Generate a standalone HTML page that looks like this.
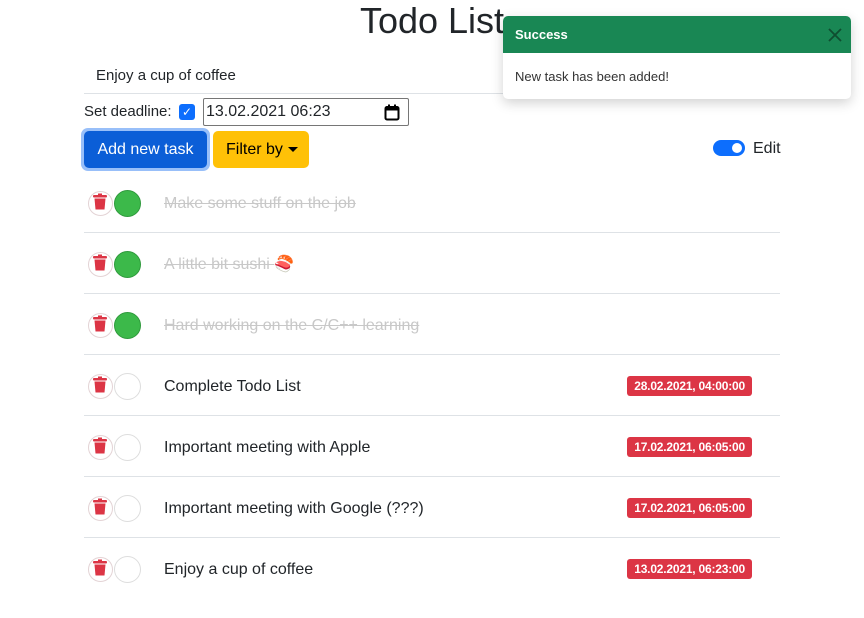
<!DOCTYPE html>
<html><head><style>
*{box-sizing:border-box;margin:0;padding:0}
body{width:864px;height:618px;background:#fff;font-family:"Liberation Sans",sans-serif;color:#212529;position:relative;overflow:hidden}
.a{position:absolute}
h1{position:absolute;left:0;width:864px;text-align:center;top:0;font-size:36px;font-weight:500;line-height:42px}
.row{position:absolute;left:84px;width:696px;height:61px;border-bottom:1px solid #dee2e6}
.tr{position:absolute;left:4px;top:19px;width:25px;height:25px;border:1px solid #e3d3d5;border-radius:50%;background:#fff}
.ck{position:absolute;left:30px;top:18px;width:27px;height:27px;border:1px solid #ddd;border-radius:50%;background:#fff}
.ck.on{background:#3cb94a;border-color:#2f9a3c}
.tx{position:absolute;left:80px;top:21px;font-size:16px;line-height:22px}
.done{color:#c8c8c8;text-decoration:line-through}
.bd{position:absolute;right:28px;top:21px;background:#dc3545;color:#fff;font-size:12px;font-weight:bold;padding:3px 7px;border-radius:3px;line-height:14px;letter-spacing:-0.2px}
</style></head><body>
<h1>Todo List</h1>
<div class="a" style="left:96px;top:67px;font-size:15px">Enjoy a cup of coffee</div>
<div class="a" style="left:84px;top:93px;width:420px;height:1px;background:#dee2e6"></div>
<div class="a" style="left:84px;top:103px;font-size:15px">Set deadline:</div>
<div class="a" style="left:179px;top:104px;width:16px;height:16px;background:#0d6efd;border-radius:3px;color:#fff;font-size:12px;text-align:center;line-height:16px">✓</div>
<div class="a" style="left:203px;top:98px;width:206px;height:28px;border:1px solid #767676;border-radius:2px;font-size:16px;padding:4px 2px;line-height:18px">13.02.2021 06:23
<svg class="a" style="right:8px;top:5px" width="16" height="17" viewBox="0 0 16 17"><rect x="1.5" y="3" width="13" height="12.5" rx="1.5" fill="none" stroke="#000" stroke-width="2"/><rect x="1" y="3" width="14" height="3.5" fill="#000"/><rect x="4" y="0.5" width="2" height="3" fill="#000"/><rect x="10" y="0.5" width="2" height="3" fill="#000"/></svg></div>
<div class="a" style="left:81px;top:128px;width:129px;height:43px;border-radius:7px;background:#98bff9"></div>
<div class="a" style="left:84px;top:131px;width:123px;height:37px;background:#0b5ed7;border-radius:5px;color:#fff;font-size:16px;text-align:center;line-height:37px">Add new task</div>
<div class="a" style="left:213px;top:131px;width:96px;height:37px;background:#ffc107;border-radius:5px;color:#000;font-size:16px;line-height:37px;padding-left:13px">Filter by<span class="a" style="left:75px;top:16px;border-left:5px solid transparent;border-right:5px solid transparent;border-top:5px solid #000"></span></div>
<div class="a" style="left:713px;top:140px;width:32px;height:16px;background:#0d6efd;border-radius:8px"><div class="a" style="right:3px;top:3px;width:10px;height:10px;background:#fff;border-radius:50%"></div></div>
<div class="a" style="left:753px;top:140px;font-size:16px">Edit</div>

<div class="row" style="top:172px"><div class="tr"></div><div class="ck on"></div><div class="tx done">Make some stuff on the job</div></div>
<div class="row" style="top:233px"><div class="tr"></div><div class="ck on"></div><div class="tx done">A little bit sushi <span style="text-decoration:none;display:inline-block;color:#000">🍣</span></div></div>
<div class="row" style="top:294px"><div class="tr"></div><div class="ck on"></div><div class="tx done">Hard working on the C/C++ learning</div></div>
<div class="row" style="top:355px"><div class="tr"></div><div class="ck"></div><div class="tx">Complete Todo List</div><div class="bd">28.02.2021, 04:00:00</div></div>
<div class="row" style="top:416px"><div class="tr"></div><div class="ck"></div><div class="tx">Important meeting with Apple</div><div class="bd">17.02.2021, 06:05:00</div></div>
<div class="row" style="top:477px"><div class="tr"></div><div class="ck"></div><div class="tx">Important meeting with Google (???)</div><div class="bd">17.02.2021, 06:05:00</div></div>
<div class="row" style="top:538px;border-bottom:none"><div class="tr"></div><div class="ck"></div><div class="tx">Enjoy a cup of coffee</div><div class="bd">13.02.2021, 06:23:00</div></div>

<svg class="a" style="left:93px;top:0" width="14" height="618">
<g fill="#dc3545">
<g transform="translate(0,195)"><rect x="0" y="0" width="14" height="2.5" rx="1"/><rect x="5" y="-1.5" width="4" height="2"/><path d="M1.5 3.5h11l-1 11h-9z"/></g>
<g transform="translate(0,256)"><rect x="0" y="0" width="14" height="2.5" rx="1"/><rect x="5" y="-1.5" width="4" height="2"/><path d="M1.5 3.5h11l-1 11h-9z"/></g>
<g transform="translate(0,317)"><rect x="0" y="0" width="14" height="2.5" rx="1"/><rect x="5" y="-1.5" width="4" height="2"/><path d="M1.5 3.5h11l-1 11h-9z"/></g>
<g transform="translate(0,378)"><rect x="0" y="0" width="14" height="2.5" rx="1"/><rect x="5" y="-1.5" width="4" height="2"/><path d="M1.5 3.5h11l-1 11h-9z"/></g>
<g transform="translate(0,439)"><rect x="0" y="0" width="14" height="2.5" rx="1"/><rect x="5" y="-1.5" width="4" height="2"/><path d="M1.5 3.5h11l-1 11h-9z"/></g>
<g transform="translate(0,500)"><rect x="0" y="0" width="14" height="2.5" rx="1"/><rect x="5" y="-1.5" width="4" height="2"/><path d="M1.5 3.5h11l-1 11h-9z"/></g>
<g transform="translate(0,561)"><rect x="0" y="0" width="14" height="2.5" rx="1"/><rect x="5" y="-1.5" width="4" height="2"/><path d="M1.5 3.5h11l-1 11h-9z"/></g>
</g></svg>

<div class="a" style="left:503px;top:16px;width:348px;height:83px;background:#fff;border-radius:5px;box-shadow:0 4px 12px rgba(0,0,0,.18);overflow:hidden">
<div style="height:37px;background:#198754;color:#fff;font-weight:bold;font-size:13px;padding:0 12px;line-height:38px;position:relative">Success
<svg class="a" style="right:8px;top:11px" width="16" height="16"><path d="M2 2L14 14M14 2L2 14" stroke="#0f4d30" stroke-width="1.8"/></svg></div>
<div style="padding:16px 12px;font-size:13px;color:#333">New task has been added!</div>
</div>
</body></html>
